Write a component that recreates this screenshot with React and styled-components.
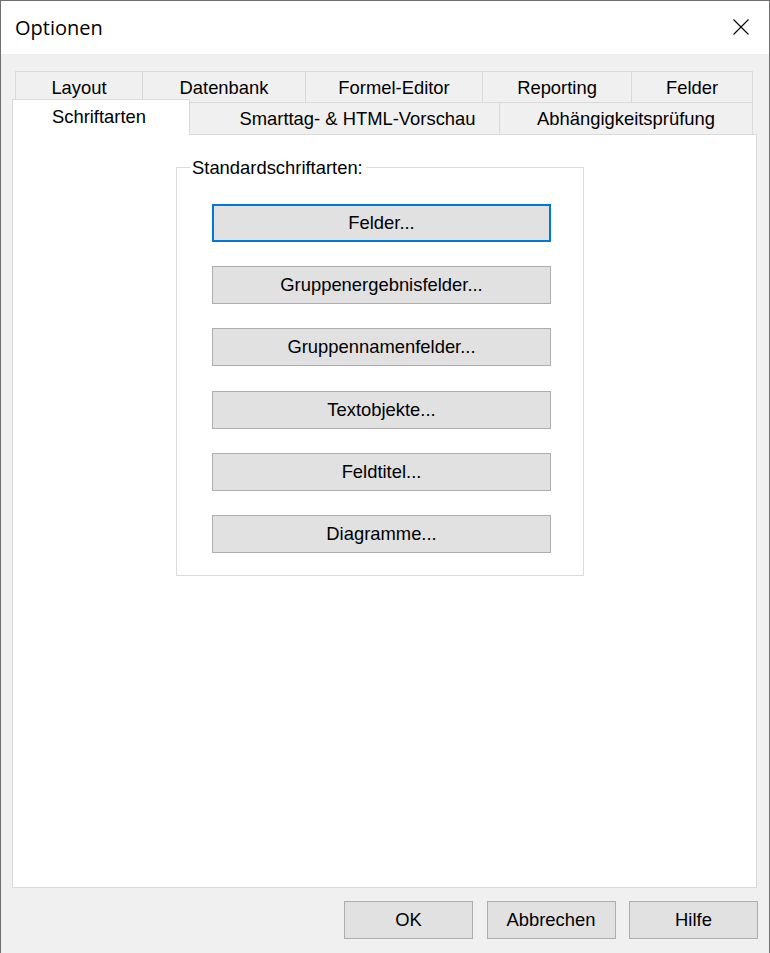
import React from "react";
import styled, { createGlobalStyle } from "styled-components";

const Global = createGlobalStyle`
  html, body { margin: 0; padding: 0; background: #2b3a55; }
  body { font-family: "Liberation Sans", Arial, sans-serif; }
  * { box-sizing: border-box; }
`;

const Dialog = styled.div`
  width: 770px;
  height: 953px;
  display: flex;
  flex-direction: column;
  background: #f0f0f0;
  border: 1px solid #6f6f6f;
  border-bottom: none;
`;

const TitleBar = styled.div`
  height: 53px;
  flex: none;
  background: #ffffff;
  display: flex;
  align-items: center;
  justify-content: space-between;
  padding: 0 20px 0 14px;
`;

const Title = styled.div`
  font-family: "Open Sans", "Noto Sans", sans-serif;
  font-size: 20px;
  color: #000;
  margin-top: -1px;
`;

const CloseButton = styled.div`
  width: 16px;
  height: 16px;
  display: flex;
  margin-top: -2px;
`;

const Body = styled.div`
  flex: 1;
  display: flex;
  flex-direction: column;
  padding: 17px 12px 0 11px;
`;

const TabRow = styled.div`
  display: flex;
  height: ${(p) => p.$h}px;
  margin-left: ${(p) => p.$ml}px;
  width: ${(p) => p.$w}px;
  align-items: flex-end;
`;

const Tab = styled.div`
  width: ${(p) => p.$w}px;
  height: 100%;
  background: #f0f0f0;
  border: 1px solid #d9d9d9;
  border-bottom: none;
  margin-left: -1px;
  &:first-child { margin-left: 0; }
  display: flex;
  align-items: center;
  justify-content: center;
  font-size: 18.4px;
  color: #000;
  padding-top: 1px;
  padding-left: ${(p) => p.$pl || 0}px;
`;

const ActiveTab = styled.div`
  width: ${(p) => p.$w}px;
  height: 36px;
  margin-top: -4px;
  margin-bottom: -1px;
  background: #ffffff;
  border: 1px solid #d9d9d9;
  border-bottom: none;
  display: flex;
  justify-content: center;
  align-items: flex-start;
  padding-top: 6px;
  padding-right: 4px;
  font-size: 18.4px;
  color: #000;
  position: relative;
  z-index: 1;
`;

const Panel = styled.div`
  height: 754px;
  width: 745px;
  background: #ffffff;
  border: 1px solid #d9d9d9;
  padding: 21px 0 0 163px;
`;

const Group = styled.fieldset`
  width: 408px;
  height: 420px;
  margin: 0;
  border: 1px solid #dcdcdc;
  padding: 26px 0 0 35px;
  display: flex;
  flex-direction: column;
  gap: 24.2px;
`;

const Legend = styled.legend`
  font-size: 18.4px;
  color: #000;
  padding: 2px 3px 0 2px;
  margin-left: -22px;
  line-height: 20px;
`;

const Button = styled.div`
  width: ${(p) => p.$w}px;
  height: 38px;
  flex: none;
  background: #e1e1e1;
  border: ${(p) => (p.$focus ? "2px solid #0078d7" : "1px solid #adadad")};
  display: flex;
  align-items: center;
  justify-content: center;
  font-size: 18.4px;
  color: #000;
`;

const Footer = styled.div`
  display: flex;
  justify-content: flex-end;
  gap: 13.5px;
  padding: 13px 0 0 0;
  margin-right: -1px;
`;

const groupButtons = [
  "Felder...",
  "Gruppenergebnisfelder...",
  "Gruppennamenfelder...",
  "Textobjekte...",
  "Feldtitel...",
  "Diagramme...",
];

export default function App() {
  return (
    <>
      <Global />
      <Dialog>
        <TitleBar>
          <Title>Optionen</Title>
          <CloseButton>
            <svg width="16" height="16" viewBox="0 0 16 16">
              <path d="M0.5 0.5 L15.5 15.5 M15.5 0.5 L0.5 15.5" stroke="#000" strokeWidth="1.1" fill="none" />
            </svg>
          </CloseButton>
        </TitleBar>
        <Body>
          <TabRow $h={31} $ml={3} $w={738}>
            <Tab $w={128}>Layout</Tab>
            <Tab $w={164}>Datenbank</Tab>
            <Tab $w={178}>Formel-Editor</Tab>
            <Tab $w={150}>Reporting</Tab>
            <Tab $w={122}>Felder</Tab>
          </TabRow>
          <TabRow $h={32} $ml={0} $w={741}>
            <ActiveTab $w={178}>Schriftarten</ActiveTab>
            <Tab $w={311} $pl={26}>Smarttag- &amp; HTML-Vorschau</Tab>
            <Tab $w={254}>Abhängigkeitsprüfung</Tab>
          </TabRow>
          <Panel>
            <Group>
              <Legend>Standardschriftarten:</Legend>
              {groupButtons.map((b, i) => (
                <Button key={b} $w={339} $focus={i === 0}>
                  {b}
                </Button>
              ))}
            </Group>
          </Panel>
          <Footer>
            <Button $w={129}>OK</Button>
            <Button $w={129}>Abbrechen</Button>
            <Button $w={129}>Hilfe</Button>
          </Footer>
        </Body>
      </Dialog>
    </>
  );
}
